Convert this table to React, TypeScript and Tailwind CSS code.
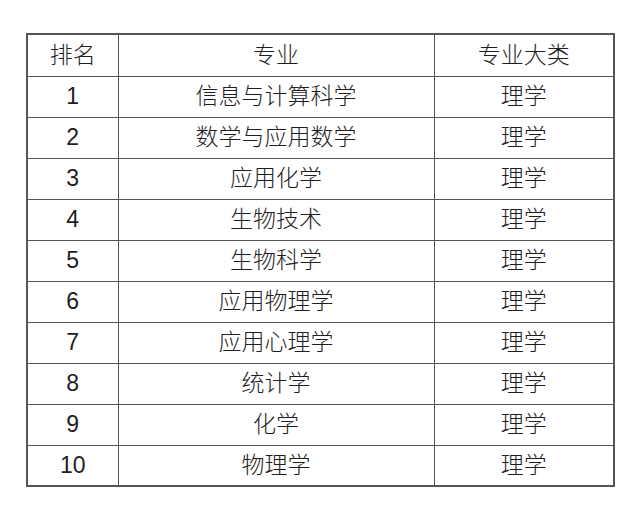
const rows: [string, string, string][] = [
  ['1', '信息与计算科学', '理学'],
  ['2', '数学与应用数学', '理学'],
  ['3', '应用化学', '理学'],
  ['4', '生物技术', '理学'],
  ['5', '生物科学', '理学'],
  ['6', '应用物理学', '理学'],
  ['7', '应用心理学', '理学'],
  ['8', '统计学', '理学'],
  ['9', '化学', '理学'],
  ['10', '物理学', '理学'],
];

const cell = 'border border-[#555] text-center align-middle p-0';

export default function App() {
  return (
    <div
      className="w-[640px] h-[522px] bg-white pt-[33px] pl-[26px] text-[#1e1e1e] text-[23px] font-light leading-none"
      style={{ fontFamily: '"Liberation Sans", "Noto Sans CJK SC", sans-serif' }}
    >
      <table className="border-collapse border-2 border-[#555]">
        <colgroup>
          <col className="w-[91px]" />
          <col className="w-[316px]" />
          <col className="w-[180px]" />
        </colgroup>
        <tbody>
          <tr className="h-[42px]">
            <td className={cell}>排名</td>
            <td className={cell}>专业</td>
            <td className={cell}>专业大类</td>
          </tr>
          {rows.map(([rank, major, cat]) => (
            <tr key={rank} className="h-[41px]">
              <td className={cell}>{rank}</td>
              <td className={cell}>{major}</td>
              <td className={cell}>{cat}</td>
            </tr>
          ))}
        </tbody>
      </table>
    </div>
  );
}
